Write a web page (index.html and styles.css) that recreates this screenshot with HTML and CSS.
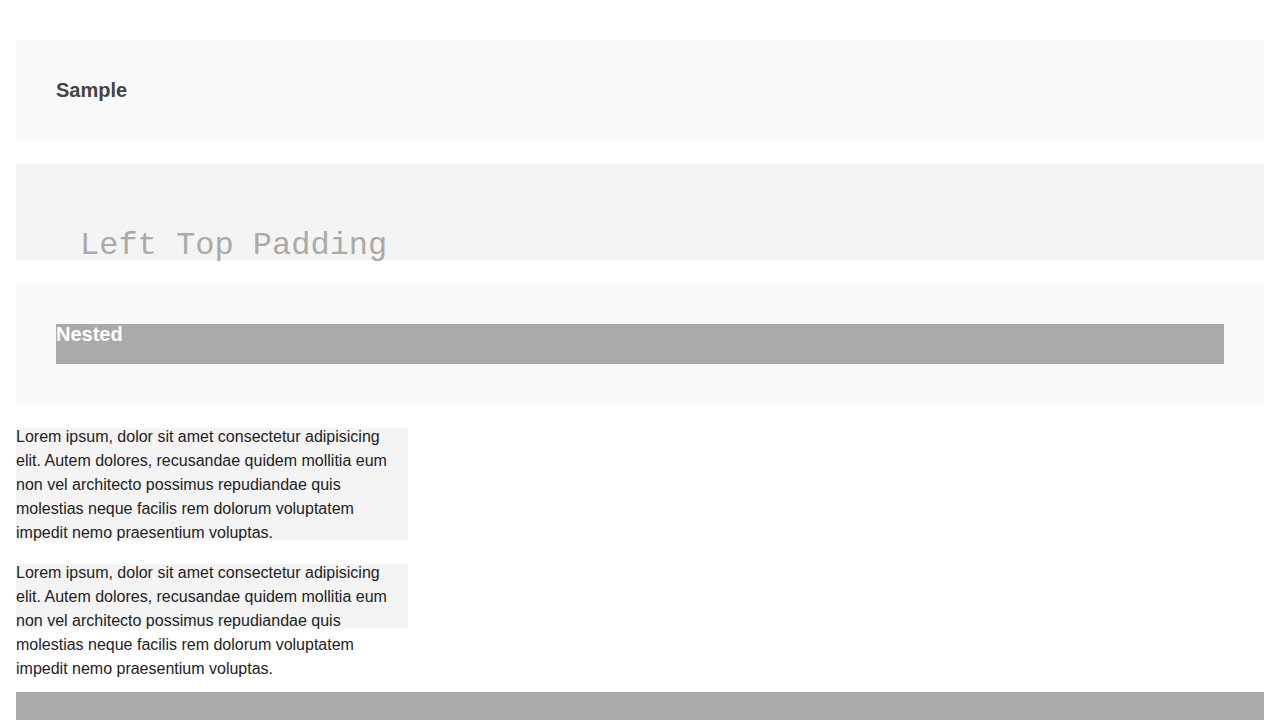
FILE: index.html
```html
<!DOCTYPE html>
<html lang="en">
<head>
<meta charset="utf-8">
<title>Padding samples</title>
<link rel="stylesheet" href="styles.css">
</head>
<body>
<main class="page">
  <section class="box box-sample">
    <h2 class="title">Sample</h2>
  </section>
  <section class="box box-lefttop">
    <p class="mono">Left Top Padding</p>
  </section>
  <section class="box box-nested">
    <div class="nested-inner">
      <h2 class="title title-white">Nested</h2>
    </div>
  </section>
  <div class="para para-tall">
    <p class="text">Lorem ipsum, dolor sit amet consectetur adipisicing elit. Autem dolores, recusandae quidem mollitia eum non vel architecto possimus repudiandae quis molestias neque facilis rem dolorum voluptatem impedit nemo praesentium voluptas.</p>
  </div>
  <div class="para para-short">
    <p class="text">Lorem ipsum, dolor sit amet consectetur adipisicing elit. Autem dolores, recusandae quidem mollitia eum non vel architecto possimus repudiandae quis molestias neque facilis rem dolorum voluptatem impedit nemo praesentium voluptas.</p>
  </div>
  <div class="footer-bar"></div>
</main>
</body>
</html>
```

FILE: styles.css
```css
html, body {
  margin: 0;
  padding: 0;
  background: #ffffff;
}

.page {
  padding: 40px 16px 0;
  display: flex;
  flex-direction: column;
  gap: 24px;
  font-family: "Liberation Sans", Arial, sans-serif;
}

.box {
  box-sizing: border-box;
}

.title {
  margin: 0;
  font-size: 20px;
  line-height: 20px;
  font-weight: 700;
  color: #444444;
}

.title-white {
  color: #ffffff;
}

.box-sample {
  background: #f9f9f9;
  padding: 40px;
}

.box-lefttop {
  background: #f4f4f4;
  height: 96px;
  padding: 62px 0 0 64px;
}

.mono {
  margin: 0;
  font-family: "Courier New", "Liberation Mono", monospace;
  font-size: 32px;
  line-height: 40px;
  color: #aaaaaa;
  white-space: nowrap;
}

.box-nested {
  background: #f9f9f9;
  padding: 40px;
}

.nested-inner {
  background: #aaaaaa;
  height: 40px;
  display: flow-root;
}

.para {
  width: 392px;
  background: #f4f4f4;
  display: flow-root;
}

.para-tall {
  height: 112px;
}

.para-short {
  height: 64px;
  margin-bottom: 40px;
}

.text {
  margin: -3px 0 0;
  font-size: 16px;
  line-height: 24px;
  color: #222222;
}

.footer-bar {
  height: 40px;
  background: #aaaaaa;
}
```
